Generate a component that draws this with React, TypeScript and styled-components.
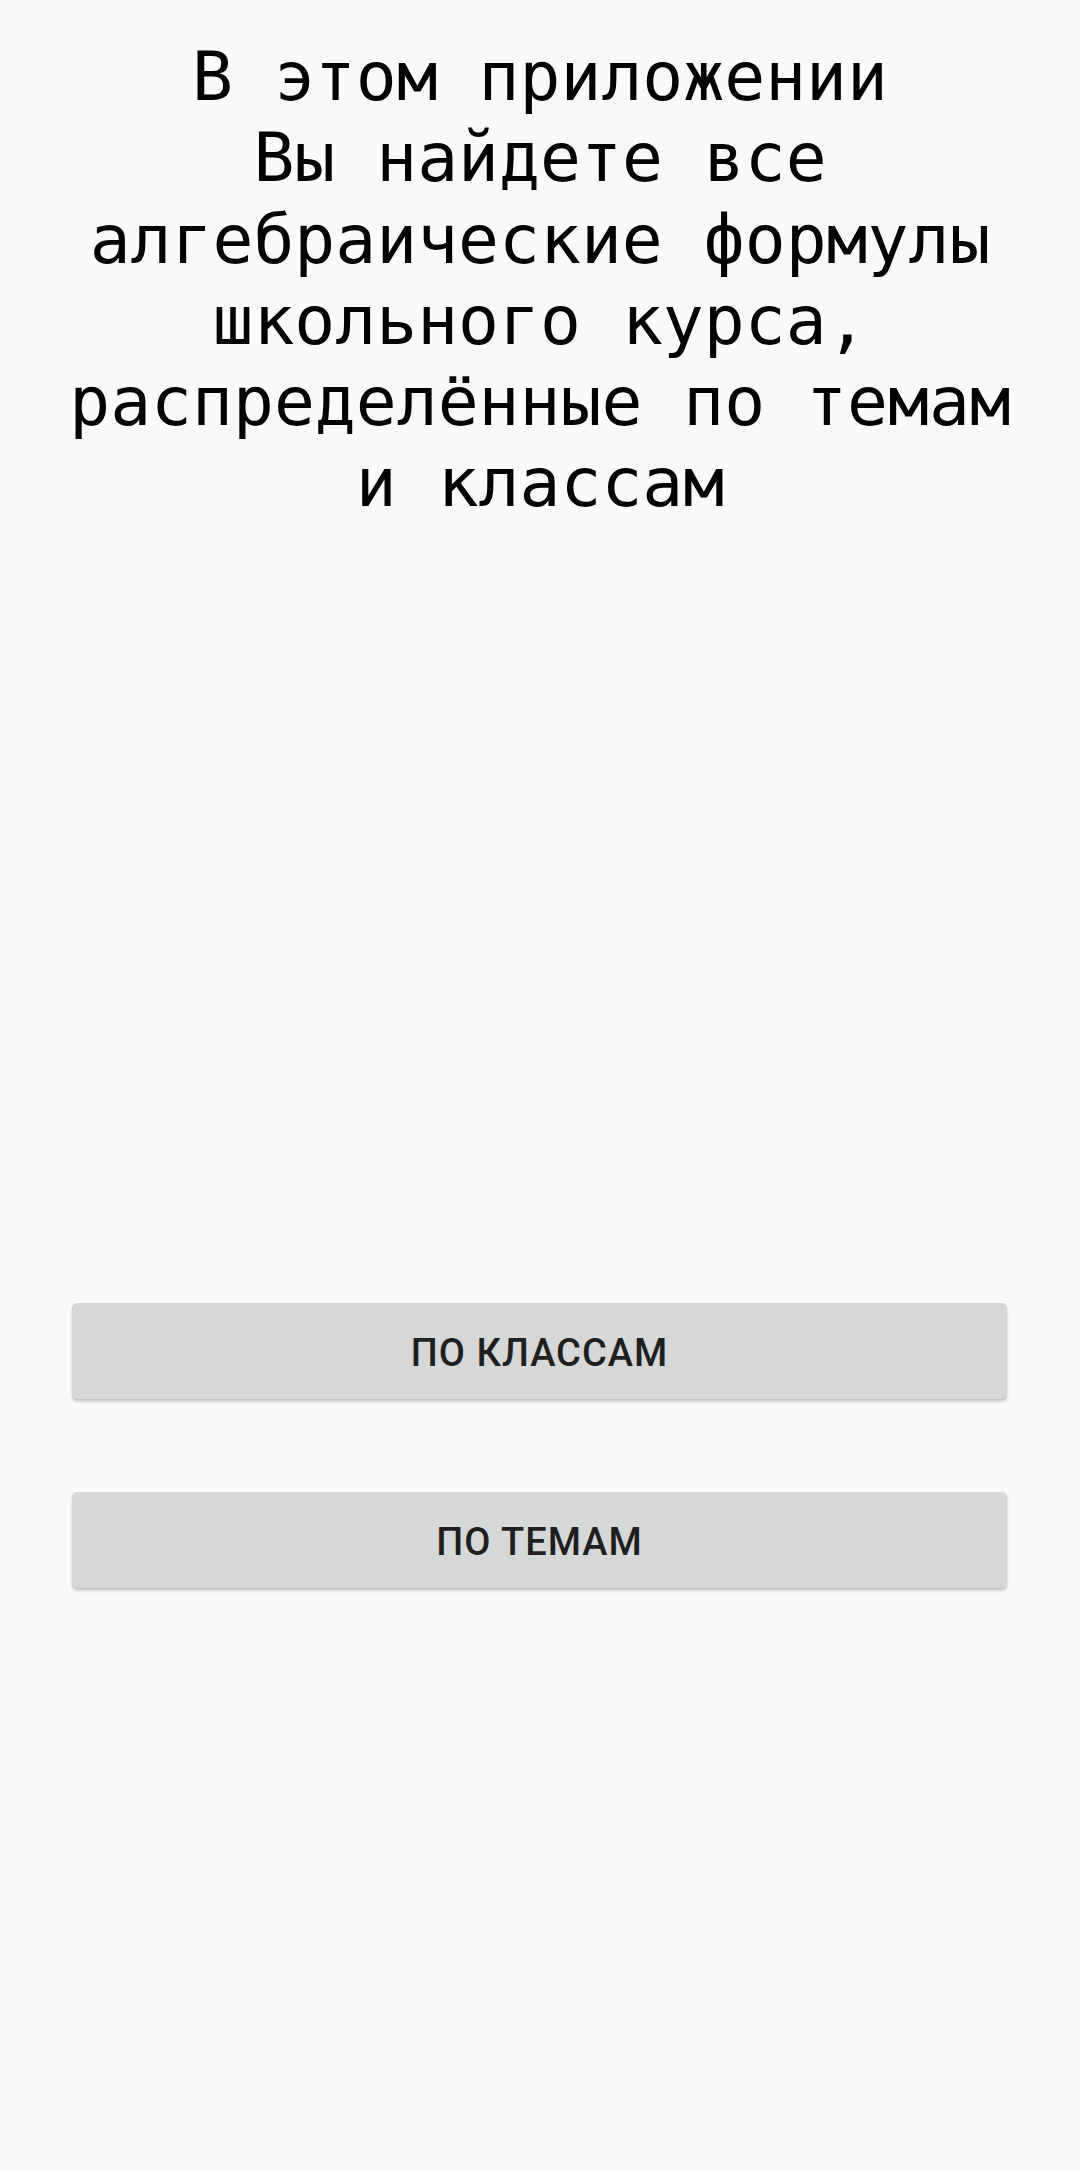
import React from "react";
import styled, { createGlobalStyle } from "styled-components";

const GlobalStyle = createGlobalStyle`
  html, body {
    margin: 0;
    padding: 0;
    background: #fafafa;
  }
  #root {
    min-height: 2170px;
  }
`;

const Screen = styled.div`
  min-height: 2170px;
  background: #fafafa;
  display: flex;
  flex-direction: column;
  align-items: stretch;
  box-sizing: border-box;
  padding-top: 36px;
`;

const Title = styled.h1`
  margin: 0;
  font-family: "DejaVu Sans Mono", "Liberation Mono", monospace;
  font-weight: normal;
  font-size: 68px;
  line-height: 81.25px;
  color: #000;
  text-align: center;
  white-space: pre-line;
`;

const ButtonGroup = styled.div`
  display: flex;
  flex-direction: column;
  gap: 93px;
  margin: 779px 73px 0 72px;
`;

const MenuButton = styled.button`
  height: 96px;
  border: none;
  border-radius: 5px;
  background: #d6d7d7;
  box-shadow: 0 3px 3px rgba(0, 0, 0, 0.16), 0 1px 2px rgba(0, 0, 0, 0.1);
  font-family: Roboto, "Liberation Sans", sans-serif;
  font-weight: 500;
  font-size: 38px;
  letter-spacing: 1px;
  color: #1f1f1f;
  text-transform: uppercase;
  display: flex;
  align-items: center;
  justify-content: center;
  padding: 4px 0 0;
  cursor: pointer;
`;

export default function App() {
  return (
    <>
      <GlobalStyle />
      <Screen>
        <Title>
          {"В этом приложении\nВы найдете все\nалгебраические формулы\nшкольного курса,\nраспределённые по темам\nи классам"}
        </Title>
        <ButtonGroup>
          <MenuButton>По классам</MenuButton>
          <MenuButton>По темам</MenuButton>
        </ButtonGroup>
      </Screen>
    </>
  );
}
